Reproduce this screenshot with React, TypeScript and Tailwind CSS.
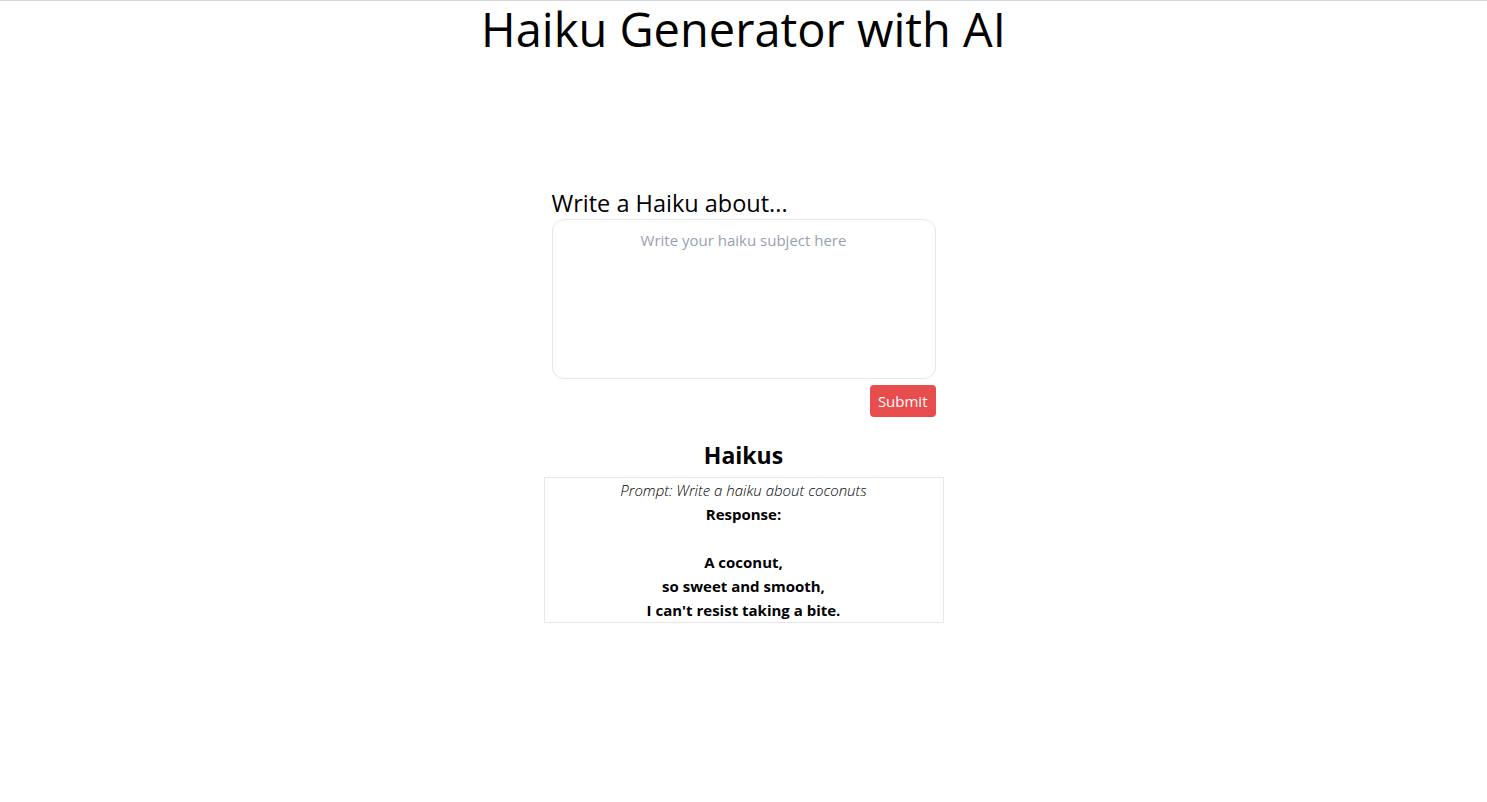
export default function App() {
  return (
    <div
      className="min-h-screen border-t border-gray-300 bg-white text-black"
      style={{ fontFamily: '"Open Sans", "Noto Sans", sans-serif' }}
    >
      <h1 className="text-center text-[47px] leading-[56px] font-normal">Haiku Generator with AI</h1>
      <div className="mx-auto mt-[130px] flex w-96 flex-col">
        <label className="text-[23.5px] leading-8">Write a Haiku about...</label>
        <textarea
          className="h-40 w-96 resize-none rounded-xl border border-gray-200 p-2 text-center text-[15px] leading-6 outline-none placeholder:text-gray-400"
          placeholder="Write your haiku subject here"
        />
        <div className="mt-1.5 flex justify-end">
          <button className="h-8 rounded bg-[#e84d4d] px-2 text-[15px] text-white">Submit</button>
        </div>
      </div>
      <h2 className="mt-[22px] text-center text-[23px] font-bold leading-8">Haikus</h2>
      <div className="mx-auto mt-1.5 w-[400px] border border-gray-200 text-center text-[15px] leading-6">
        <p className="font-light italic">Prompt: Write a haiku about coconuts</p>
        <p className="font-bold">Response:</p>
        <p className="whitespace-pre-line font-bold">
          {"\nA coconut,\nso sweet and smooth,\nI can't resist taking a bite."}
        </p>
      </div>
    </div>
  );
}
